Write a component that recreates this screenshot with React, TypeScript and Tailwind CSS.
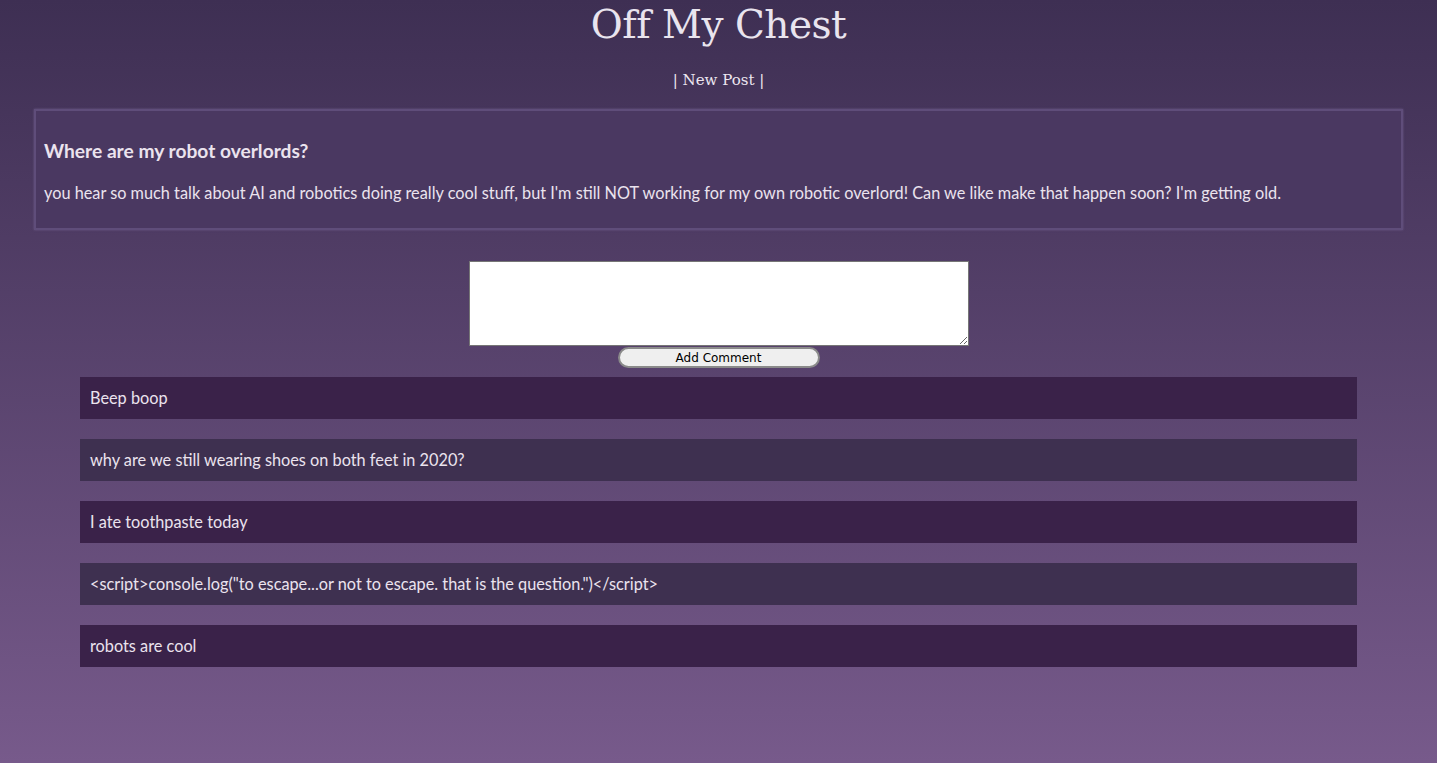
export default function App() {
  const comments = [
    "Beep boop",
    "why are we still wearing shoes on both feet in 2020?",
    "I ate toothpaste today",
    '<script>console.log("to escape...or not to escape. that is the question.")</script>',
    "robots are cool",
  ];

  return (
    <div className="min-h-[763px] w-full bg-gradient-to-b from-[#3e2f53] to-[#775a8b] font-['Lato','Open_Sans',sans-serif] text-[#ebe3ee]">
      {/* HEADER */}
      <h1 className="pt-[1px] text-center font-['DejaVu_Serif',serif] text-[39px] leading-[48px] tracking-[-0.5px] text-[#e9e4ee]">
        Off My Chest
      </h1>
      <nav className="mt-[20px] text-center font-['DejaVu_Serif',serif] text-[15px] leading-[22px] text-[#ece6f0]">
        | New Post |
      </nav>

      {/* POST */}
      <div className="mx-[34px] mt-[18px] h-[121px] border-2 border-[#5f4d7a] bg-[#4a3861] px-[8px] pt-[26px] shadow-[0_0_2px_#6a5785]">
        <h2 className="text-[19.2px] font-bold leading-[28px]">Where are my robot overlords?</h2>
        <p className="mt-[17px] text-[16.3px] leading-[22px]">
          you hear so much talk about AI and robotics doing really cool stuff, but I'm still NOT working for my own robotic overlord! Can we like make that happen soon? I'm getting old.
        </p>
      </div>

      {/* COMMENT FORM */}
      <form className="mt-[31px] flex flex-col items-center">
        <textarea className="h-[85px] w-[500px] border border-[#767676] bg-white" />
        <button
          type="button"
          className="mt-[1px] h-[21px] w-[202px] rounded-full border-2 border-[#8a8a8a] bg-[#efefef] font-['DejaVu_Sans',sans-serif] text-[12px] leading-[16px] text-black"
        >
          Add Comment
        </button>
      </form>

      {/* COMMENTS */}
      <div className="mx-[80px] mt-[9px] flex flex-col gap-[20px]">
        {comments.map((c, i) => (
          <div
            key={i}
            className={
              "flex h-[42px] items-center px-[10px] text-[16.3px] " +
              (i % 2 === 0 ? "bg-[#3a2249]" : "bg-[#3e3050]")
            }
          >
            {c}
          </div>
        ))}
      </div>
    </div>
  );
}
